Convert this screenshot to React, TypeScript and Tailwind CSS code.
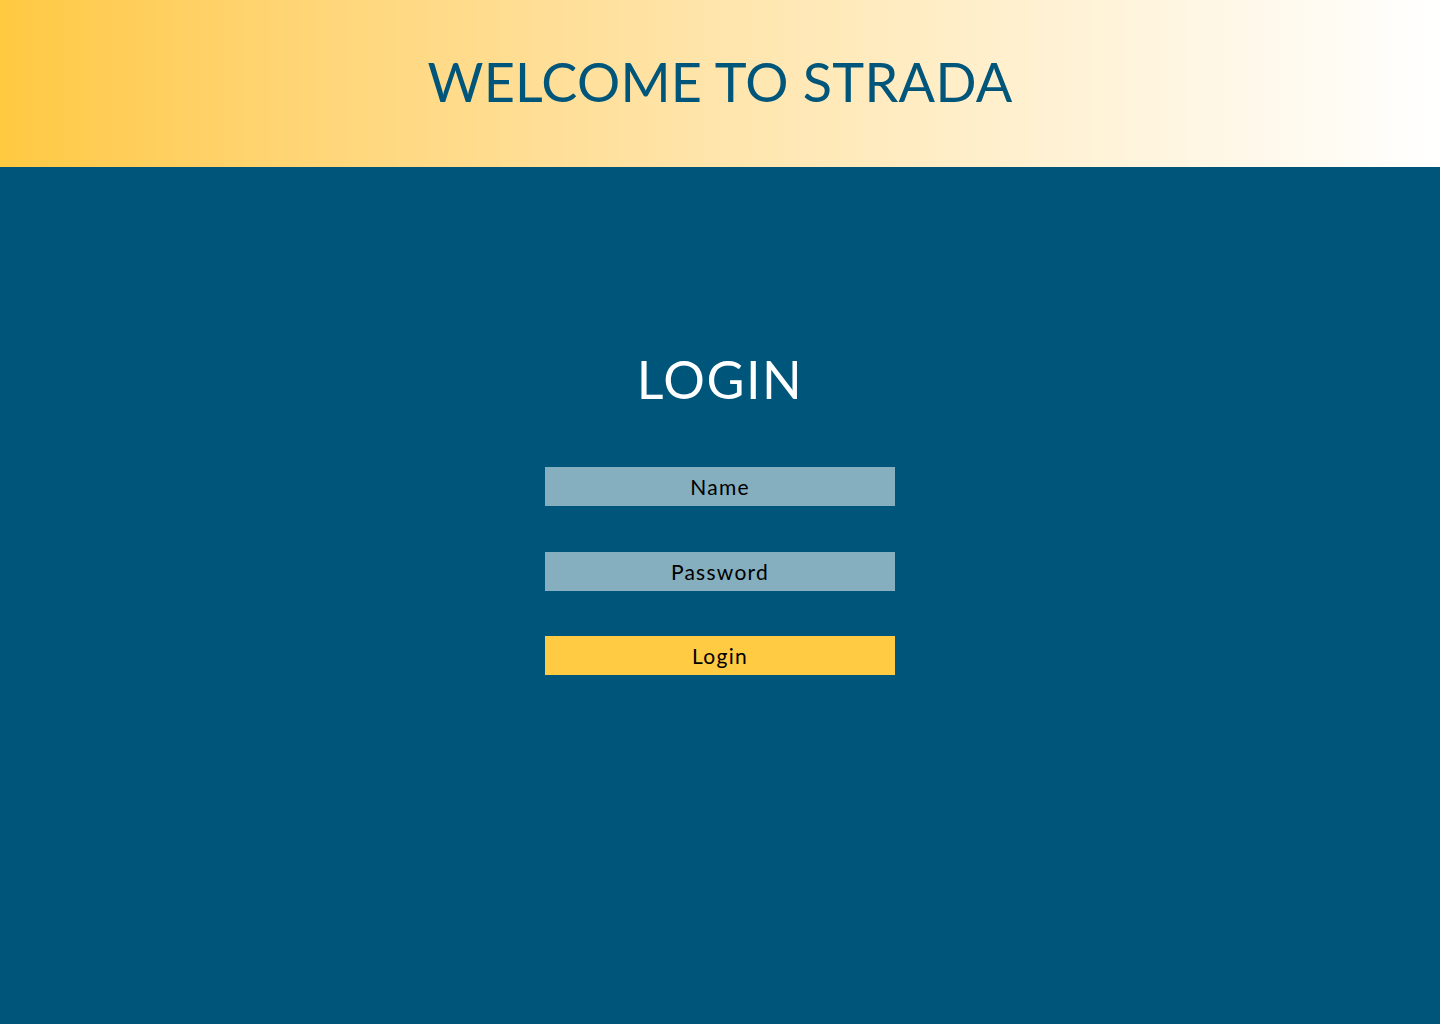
export default function App() {
  return (
    <div className="flex min-h-screen flex-col font-['Lato','Liberation_Sans',sans-serif]">
      <header className="flex h-[167px] items-center justify-center bg-linear-to-r from-[#ffc940] to-white">
        <h1 className="pb-1 text-[54px] font-normal tracking-[0.005em] text-[#00557a]">WELCOME TO STRADA</h1>
      </header>
      <main className="flex flex-1 flex-col items-center bg-[#00557a] pt-[186px]">
        <h2 className="text-[52px] leading-none font-normal tracking-[0.03em] text-white">LOGIN</h2>
        <form className="mt-[62px] flex w-[350px] flex-col">
          <input
            type="text"
            placeholder="Name"
            className="h-[39px] w-full bg-[#85aebe] text-center text-[21px] tracking-[0.06em] text-black outline-none placeholder:text-black"
          />
          <input
            type="password"
            placeholder="Password"
            className="mt-[46px] h-[39px] w-full bg-[#85aebe] text-center text-[21px] tracking-[0.06em] text-black outline-none placeholder:text-black"
          />
          <button
            type="button"
            className="mt-[45px] h-[39px] w-full bg-[#ffcb43] text-center text-[21px] tracking-[0.06em] text-black"
          >
            Login
          </button>
        </form>
      </main>
    </div>
  );
}
